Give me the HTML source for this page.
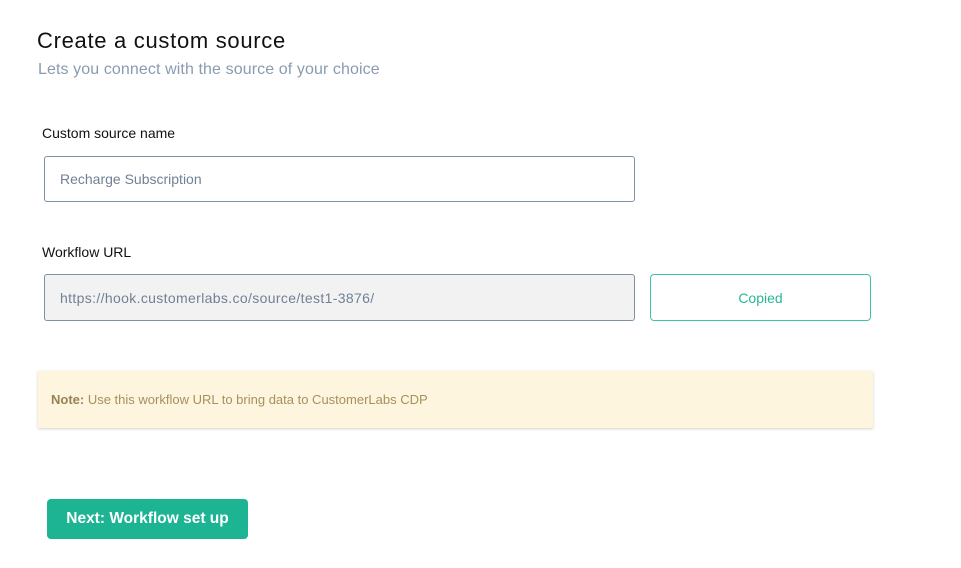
<!DOCTYPE html>
<html><head><style>
*{box-sizing:border-box;margin:0;padding:0}
body{width:961px;height:568px;background:#fff;font-family:"Liberation Sans",sans-serif;position:relative;overflow:hidden}
.a{position:absolute}
h1{position:absolute;left:37px;top:28px;font-size:22px;font-weight:normal;color:#111;letter-spacing:0.7px}
.sub{left:38px;top:61px;font-size:16px;color:#8a9bb0;letter-spacing:0.1px}
.lbl{font-size:14px;color:#111}
.inp{border:1px solid #7f90a6;border-radius:3px;font-size:14px;color:#718096;padding-left:15px;display:flex;align-items:center}
</style></head><body>
<h1>Create a custom source</h1>
<div class="a sub">Lets you connect with the source of your choice</div>
<div class="a lbl" style="left:42px;top:125px">Custom source name</div>
<div class="a inp" style="left:44px;top:156px;width:591px;height:46px">Recharge Subscription</div>
<div class="a lbl" style="left:42px;top:244px">Workflow URL</div>
<div class="a inp" style="left:44px;top:274px;width:591px;height:47px;background:#f2f2f2;letter-spacing:0.35px">https://hook.customerlabs.co/source/test1-3876/</div>
<div class="a" style="left:650px;top:274px;width:221px;height:47px;border:1.5px solid #3cc3a5;border-radius:4px;color:#2bb596;font-size:14px;display:flex;align-items:center;justify-content:center">Copied</div>
<div class="a" style="left:38px;top:371px;width:835px;height:57px;background:#fdf5dd;box-shadow:0 1px 3px rgba(0,0,0,.18);font-size:13px;color:#a8905e;padding-left:13px;display:flex;align-items:center"><b style="color:#9a8256">Note:</b>&nbsp;Use this workflow URL to bring data to CustomerLabs CDP</div>
<div class="a" style="left:47px;top:499px;width:201px;height:40px;background:#1cb493;border-radius:4px;color:#fff;font-weight:bold;font-size:15.5px;display:flex;align-items:center;justify-content:center">Next: Workflow set up</div>
</body></html>
